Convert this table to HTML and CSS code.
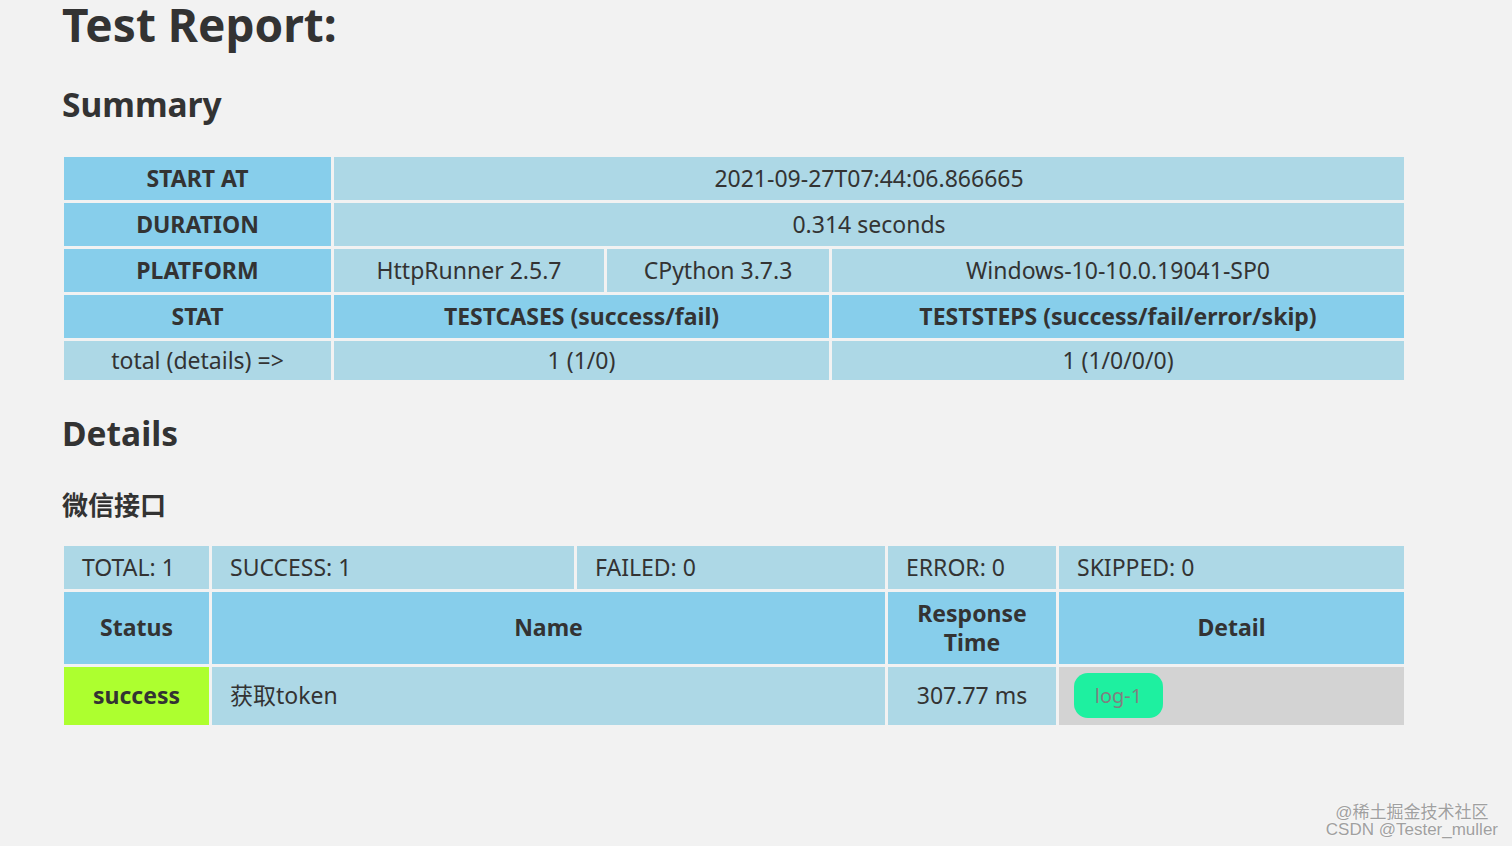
FILE: index.html
```html
<!DOCTYPE html>
<html lang="en">
<head>
<meta charset="utf-8">
<title>Test Report</title>
<link rel="stylesheet" href="styles.css">
</head>
<body>
<main class="report">
  <h1 class="title">Test Report:</h1>
  <h2 class="section">Summary</h2>
  <table class="grid summary">
    <colgroup>
      <col class="s-c1"><col class="s-c2"><col class="s-c3"><col class="s-c4">
    </colgroup>
    <tr class="r43">
      <th>START AT</th>
      <td colspan="3">2021-09-27T07:44:06.866665</td>
    </tr>
    <tr class="r43">
      <th>DURATION</th>
      <td colspan="3">0.314 seconds</td>
    </tr>
    <tr class="r43">
      <th>PLATFORM</th>
      <td>HttpRunner 2.5.7</td>
      <td>CPython 3.7.3</td>
      <td>Windows-10-10.0.19041-SP0</td>
    </tr>
    <tr class="r43">
      <th>STAT</th>
      <th colspan="2">TESTCASES (success/fail)</th>
      <th>TESTSTEPS (success/fail/error/skip)</th>
    </tr>
    <tr class="r39">
      <td>total (details) =&gt;</td>
      <td colspan="2">1 (1/0)</td>
      <td>1 (1/0/0/0)</td>
    </tr>
  </table>

  <h2 class="section details-h">Details</h2>
  <h3 class="suite">微信接口</h3>
  <table class="grid details">
    <colgroup>
      <col class="d-c1"><col class="d-c2"><col class="d-c3"><col class="d-c4"><col class="d-c5">
    </colgroup>
    <tr class="r43">
      <td class="left">TOTAL: 1</td>
      <td class="left">SUCCESS: 1</td>
      <td class="left">FAILED: 0</td>
      <td class="left">ERROR: 0</td>
      <td class="left">SKIPPED: 0</td>
    </tr>
    <tr class="r72">
      <th>Status</th>
      <th colspan="2">Name</th>
      <th>Response<br>Time</th>
      <th>Detail</th>
    </tr>
    <tr class="r58">
      <th class="success">success</th>
      <td class="left" colspan="2">获取token</td>
      <td>307.77 ms</td>
      <td class="detail"><button class="log-btn" type="button">log-1</button></td>
    </tr>
  </table>
</main>
<div class="watermark">
  <div>@稀土掘金技术社区</div>
  <div>CSDN @Tester_muller</div>
</div>
</body>
</html>
```
FILE: styles.css
```css
html, body {
  margin: 0;
  padding: 0;
  background: #f2f2f2;
  height: 100%;
  overflow: hidden;
}
body {
  font-family: "Noto Sans", "Noto Sans CJK SC", sans-serif;
  color: #333333;
  position: relative;
}
.report {
  padding-left: 61px;
  width: 1346px;
}
.title {
  margin: 1px 0 0 1px;
  font-size: 46px;
  line-height: 46px;
  font-weight: 700;
}
.section {
  margin: 41px 0 0 1px;
  font-size: 33.5px;
  line-height: 33.5px;
  font-weight: 700;
}
.details-h {
  margin-top: 34px;
}
.suite {
  margin: 40px 0 0 1px;
  font-size: 26px;
  line-height: 26px;
  font-weight: 700;
  font-family: "Noto Sans CJK SC", sans-serif;
}
.grid {
  border-collapse: separate;
  border-spacing: 3px;
  table-layout: fixed;
  width: 1346px;
  font-size: 23px;
}
.summary { margin-top: 32.5px; }
.details { margin-top: 26px; }
.grid th, .grid td {
  padding: 0 8px;
  text-align: center;
  vertical-align: middle;
  line-height: 29px;
}
.grid th {
  background: #87ceeb;
  font-weight: 700;
}
.grid td {
  background: #add8e6;
  font-weight: 400;
}
.grid .left {
  text-align: left;
  padding-left: 18px;
}
.r43 { height: 43px; }
.r39 { height: 39px; }
.r72 { height: 72px; }
.r58 { height: 58px; }
.grid th.success {
  background: #adff2f;
}
.grid td.detail {
  background: #d3d3d3;
  text-align: left;
  padding-left: 15px;
}
.s-c1 { width: 267px; }
.s-c2 { width: 270px; }
.s-c3 { width: 222px; }
.s-c4 { width: 572px; }
.d-c1 { width: 145px; }
.d-c2 { width: 362px; }
.d-c3 { width: 308px; }
.d-c4 { width: 168px; }
.d-c5 { width: 345px; }
.log-btn {
  width: 89px;
  height: 45px;
  border: none;
  border-radius: 14px;
  background: #1ef0a0;
  color: #808080;
  font-family: "Noto Sans", sans-serif;
  font-size: 20px;
  padding: 0;
  display: block;
}
.watermark {
  position: absolute;
  right: 14px;
  bottom: 8px;
  font-family: "Liberation Sans", "Noto Sans CJK SC", sans-serif;
  font-size: 17px;
  line-height: 17px;
  color: #a0a0a0;
  text-align: center;
  text-shadow: 0 0 2px #ffffff;
}
```
